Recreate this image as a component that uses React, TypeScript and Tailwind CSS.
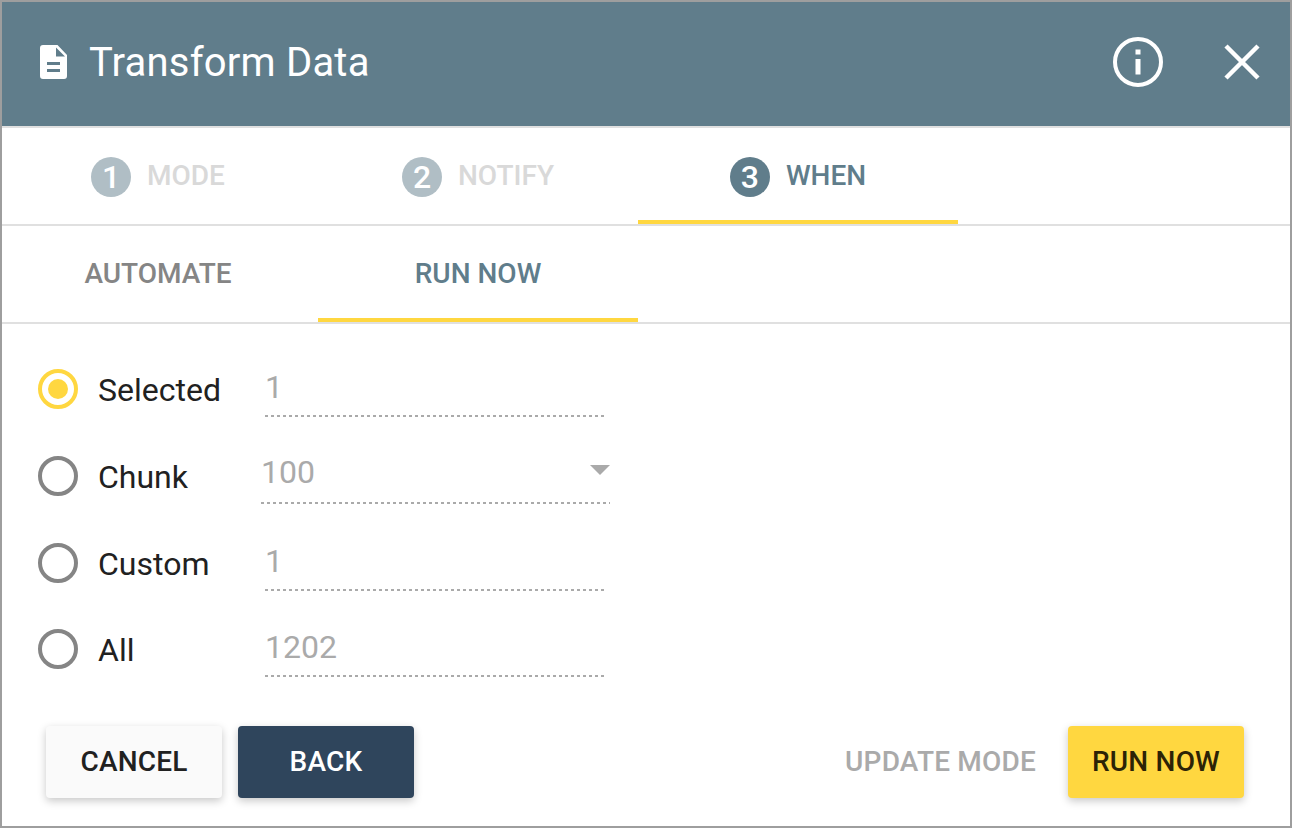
const STEPS = [
  { n: 1, label: 'MODE', active: false },
  { n: 2, label: 'NOTIFY', active: false },
  { n: 3, label: 'WHEN', active: true },
];

const ROWS = [
  { label: 'Selected', value: '1', checked: true, select: false },
  { label: 'Chunk', value: '100', checked: false, select: true },
  { label: 'Custom', value: '1', checked: false, select: false },
  { label: 'All', value: '1202', checked: false, select: false },
];

function Radio({ checked }: { checked: boolean }) {
  return (
    <span
      className={`flex size-10 shrink-0 items-center justify-center rounded-full border-4 ${
        checked ? 'border-[#ffd740]' : 'border-[#858585]'
      }`}
    >
      {checked && <span className="size-5 rounded-full bg-[#ffd740]" />}
    </span>
  );
}

function Row({ label, value, checked, select }: (typeof ROWS)[number]) {
  return (
    <div className="flex h-[86.67px] items-center">
      <Radio checked={checked} />
      <span className="ml-5 w-[167px] pt-[2px] text-[32px] leading-none text-[#212121]">{label}</span>
      {select ? (
        <div className="relative -ml-1 mt-[-4px] h-[60px] w-[349px] bg-[repeating-linear-gradient(90deg,#aaa_0_3px,transparent_3px_6px)] bg-[length:100%_2px] bg-bottom bg-no-repeat pt-[10px] text-[32px] leading-[36px] text-[#aaa]">
          {value}
          <span className="absolute top-[21px] right-0 h-0 w-0 border-x-[10px] border-t-[10px] border-x-transparent border-t-[#aaa]" />
        </div>
      ) : (
        <div className="mt-[-4px] h-[60px] w-[341px] bg-[repeating-linear-gradient(90deg,#aaa_0_3px,transparent_3px_6px)] bg-[length:100%_2px] bg-bottom bg-no-repeat pt-[12px] text-[32px] leading-[36px] text-[#aaa]">
          {value}
        </div>
      )}
    </div>
  );
}

export default function App() {
  return (
    <div className="h-[828px] w-[1292px] overflow-hidden border-2 border-[#9e9e9e] bg-white font-['Roboto',sans-serif]">
      <header className="flex h-[124px] items-center bg-[#607d8b] pr-[29px] pb-1 pl-[38px] text-white">
        <svg viewBox="0 0 27 34" className="h-[34px] w-[27px]" fill="currentColor">
          <path
            fillRule="evenodd"
            d="M3 0h14.5L27 10v21a3 3 0 0 1-3 3H3a3 3 0 0 1-3-3V3a3 3 0 0 1 3-3ZM16 2.5V11.5H25ZM7 17v3h13v-3ZM7 24v3h13v-3Z"
          />
        </svg>
        <h1 className="mt-px ml-[22px] text-[40px] leading-none font-normal tracking-[0.2px]">Transform Data</h1>
        <div className="ml-auto flex items-center gap-[60px]">
          <svg viewBox="0 0 50 50" className="size-[50px]" fill="none">
            <circle cx="25" cy="25" r="23" stroke="currentColor" strokeWidth="4" />
            <rect x="22.5" y="12.5" width="5" height="5" fill="currentColor" />
            <rect x="22.5" y="22" width="5" height="15.5" fill="currentColor" />
          </svg>
          <svg viewBox="0 0 38 38" className="size-[38px]" fill="none" stroke="currentColor" strokeWidth="4.5">
            <path d="M3 3 35 35M35 3 3 35" />
          </svg>
        </div>
      </header>

      <nav className="-ml-1 flex h-[100px] w-[1292px] border-y-2 border-[#e0e0e0]">
        {STEPS.map((s) => (
          <div
            key={s.n}
            className={`flex h-full w-[320px] items-center justify-center gap-4 border-b-4 pt-[6px] ${
              s.active ? 'border-[#ffd740]' : 'border-transparent'
            }`}
          >
            <span
              className={`flex size-10 items-center justify-center rounded-full text-[32px] leading-none font-medium text-white ${
                s.active ? 'bg-[#607d8b]' : 'bg-[#b0bec5]'
              }`}
            >
              {s.n}
            </span>
            <span
              className={`mt-[-2px] text-[28px] leading-none font-medium ${
                s.active ? 'text-[#607d8b]' : 'text-[#d9d9d9]'
              }`}
            >
              {s.label}
            </span>
          </div>
        ))}
      </nav>

      <nav className="-ml-1 flex h-[98px] w-[1292px] border-b-2 border-[#e0e0e0]">
        <div className="flex w-[320px] items-center justify-center border-b-4 border-transparent pt-1 text-[28px] font-medium text-[#858585]">
          AUTOMATE
        </div>
        <div className="flex w-[320px] items-center justify-center border-b-4 border-[#ffd740] pt-1 text-[28px] font-medium text-[#607d8b]">
          RUN NOW
        </div>
      </nav>

      <main className="px-[36px] pt-[22px]">
        {ROWS.map((r) => (
          <Row key={r.label} {...r} />
        ))}
      </main>

      <footer className="mt-[33px] flex items-center pr-[46px] pl-[44px] text-[28px] font-medium tracking-[0.2px]">
        <button className="h-[72px] w-[176px] rounded bg-[#fafafa] text-[#212121] shadow-[0_3px_8px_rgba(0,0,0,0.22)]">
          CANCEL
        </button>
        <button className="ml-4 h-[72px] w-[176px] rounded bg-[#2f455c] text-white shadow-[0_3px_8px_rgba(0,0,0,0.22)]">
          BACK
        </button>
        <span className="mr-8 ml-auto text-[#aaa]">UPDATE MODE</span>
        <button className="h-[72px] w-[176px] rounded bg-[#ffd740] text-[#2c2306] shadow-[0_3px_8px_rgba(0,0,0,0.22)]">
          RUN NOW
        </button>
      </footer>
    </div>
  );
}
